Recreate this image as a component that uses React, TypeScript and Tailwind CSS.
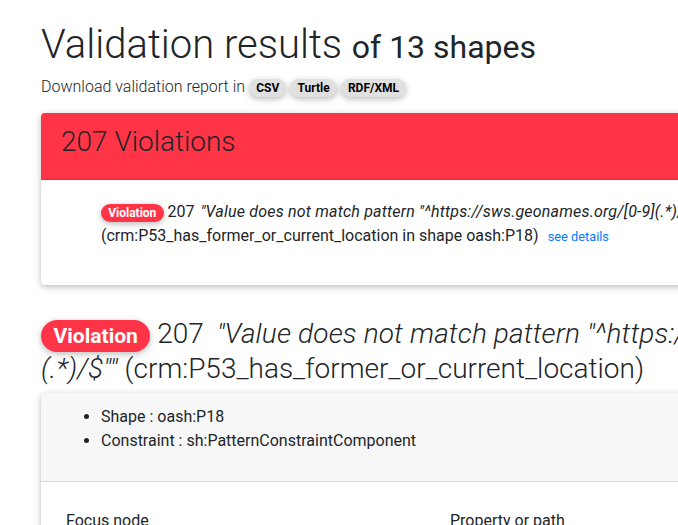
import React from 'react';

const shadow = 'shadow-[0_2px_5px_0_rgba(0,0,0,0.16),0_2px_10px_0_rgba(0,0,0,0.12)]';

function LightBadge({ children }: { children: React.ReactNode }) {
  return (
    <span className="inline-block align-baseline rounded-full bg-[#e0e0e0] px-[7.2px] py-[3px] text-[12px] font-bold leading-none text-black shadow-[0_2px_5px_0_rgba(0,0,0,0.16),0_2px_10px_0_rgba(0,0,0,0.12)]">
      {children}
    </span>
  );
}

export default function App() {
  return (
    <div className="w-[678px] h-[525px] overflow-hidden bg-white font-['Roboto',sans-serif] text-[#212529]">
      <div className="w-[1100px] pl-[41px] pt-[21px]">
        <div className="w-[962px]">
          {/* title */}
          <h1 className="text-[40px] font-light leading-[1.2] mb-2">
            Validation results <small className="text-[32px] font-normal">of 13 shapes</small>
          </h1>
          <h6 className="text-base font-light leading-[1.2] mb-[16px]">
            Download validation report in <LightBadge>CSV</LightBadge> <LightBadge>Turtle</LightBadge>{' '}
            <LightBadge>RDF/XML</LightBadge>
          </h6>

          {/* summary card */}
          <div className={`rounded-[4px] bg-white ${shadow}`}>
            <div className="bg-[#ff3547] px-5 py-3 rounded-t-[4px] border-b border-black/[0.125]">
              <h3 className="text-[28px] font-light leading-[1.2] mb-2">207 Violations</h3>
            </div>
            <div className="p-5">
              <ul className="list-none pl-10 mb-4">
                <li className="text-base leading-6">
                  <span className="inline-block align-baseline rounded-full bg-[#ff3547] px-[7.2px] py-[3px] text-[12px] font-bold leading-none text-white shadow-[0_2px_5px_0_rgba(0,0,0,0.16),0_2px_10px_0_rgba(0,0,0,0.12)]">
                    Violation
                  </span>{' '}
                  207{' '}
                  <i className="ml-[2px] tracking-[0.2px]">"Value does not match pattern "^https://sws.geonames.org/[0-9](.*)/$""</i>{' '}
                  (crm:P53_has_former_or_current_location in shape oash:P18)
                  <a className="ml-[9px] text-[12.8px] text-[#007bff]">see details</a>
                </li>
              </ul>
            </div>
          </div>

          {/* detail heading */}
          <h3 className="mt-[32px] text-[28px] font-light leading-[1.2] mb-2">
            <span className="inline-block align-baseline rounded-full bg-[#ff3547] px-[12.6px] py-[5.25px] text-[21px] font-bold leading-none text-white shadow-[0_2px_5px_0_rgba(0,0,0,0.16),0_2px_10px_0_rgba(0,0,0,0.12)]">
              Violation
            </span>{' '}
            207{' '}
            <i className="ml-[6px] tracking-[0.15px]">"Value does not match pattern "^https://sws.geonames.org/[0-9](.*)/$""</i>{' '}
            (crm:P53_has_former_or_current_location)
          </h3>

          {/* detail card */}
          <div className={`rounded-[4px] bg-white ${shadow}`}>
            <div className="bg-[#f7f7f7] px-5 py-3 rounded-t-[4px] border-b border-black/[0.125]">
              <ul className="list-disc pl-10 mb-4 text-base leading-6">
                <li>Shape : oash:P18</li>
                <li>Constraint : sh:PatternConstraintComponent</li>
              </ul>
            </div>
            <div className="px-5 pt-[27px] pb-5">
              <div className="grid grid-cols-[384px_260px_1fr] text-base leading-6">
                <div className="px-[5px]">Focus node</div>
                <div className="px-[5px]">Property or path</div>
                <div className="px-[5px]">Value</div>
              </div>
              <div className="h-[200px]"></div>
            </div>
          </div>
        </div>
      </div>
    </div>
  );
}
